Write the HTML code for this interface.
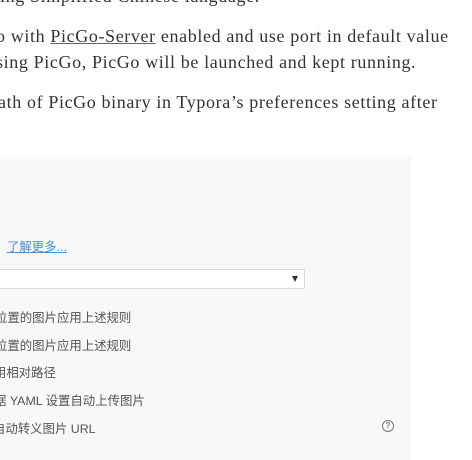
<!DOCTYPE html>
<html><head><meta charset="utf-8"><style>
html,body{margin:0;padding:0;width:472px;height:460px;overflow:hidden;background:#fff;position:relative}
.t{position:absolute;left:0;font-family:"Liberation Serif",serif;font-size:18px;color:#333;white-space:nowrap;letter-spacing:0.62px}
.t u{color:#333;text-decoration:underline;text-decoration-color:#666}
.panel{position:absolute;left:0;top:157px;width:411px;height:303px;background:#f8f8f8}
.c{position:absolute;font-family:"Liberation Sans","Noto Sans CJK SC",sans-serif;font-size:12.4px;color:#555;white-space:nowrap}
</style></head><body>
<div class="t" style="top:-14px">ing Simplified Chinese language.</div>
<div class="t" style="top:26px;left:-4px">o with <u>PicGo-Server</u> enabled and use port in default value</div>
<div class="t" style="top:52px;left:-4px">sing PicGo, PicGo will be launched and kept running.</div>
<div class="t" style="top:92px;left:-2px">ath of PicGo binary in Typora’s preferences setting after</div>
<div class="panel">
<div class="c" style="left:7px;top:80px;color:#4a90d9;text-decoration:underline">了解更多...</div>
<div style="position:absolute;left:-2px;top:112px;width:305px;height:18px;background:#fff;border:1px solid #ddd"></div>
<div style="position:absolute;left:292px;top:119px;width:0;height:0;border-left:3.5px solid transparent;border-right:3.5px solid transparent;border-top:6px solid #333"></div>
<div class="c" style="left:-5px;top:151px">位置的图片应用上述规则</div>
<div class="c" style="left:-5px;top:179px">位置的图片应用上述规则</div>
<div class="c" style="left:-6px;top:206px">用相对路径</div>
<div class="c" style="left:-6px;top:234px">据 YAML 设置自动上传图片</div>
<div class="c" style="left:-7px;top:262px">自动转义图片 URL</div>
<div style="position:absolute;left:382px;top:263px;width:10px;height:10px;border:1px solid #777;border-radius:50%;font:bold 8px 'Liberation Sans',sans-serif;color:#777;text-align:center;line-height:10px">?</div>
</div>
</body></html>
